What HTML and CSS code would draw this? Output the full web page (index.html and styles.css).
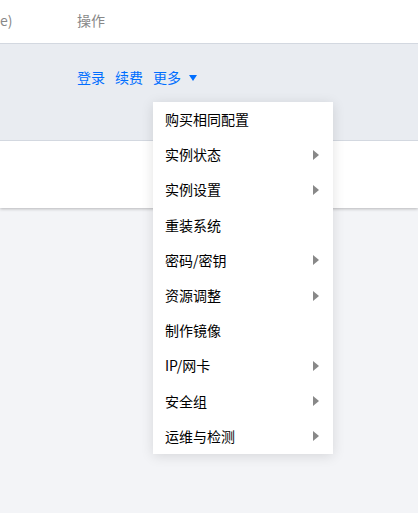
FILE: index.html
```html
<!DOCTYPE html>
<html>
<head>
	<meta charset="utf-8">
	<meta name="viewport" content="width=device-width, initial-scale=1">
	<title>实例列表</title>
	<link rel="stylesheet" href="styles.css">
</head>
<body>
	<div class="table">
		<div class="row thead">
			<div class="cell first">e)</div>
			<div class="cell">操作</div>
		</div>
		<div class="row hover">
			<div class="cell first"></div>
			<div class="cell actions">
				<a class="link">登录</a>
				<a class="link">续费</a>
				<span class="more">
					<a class="link">更多</a>
					<i class="caret"></i>
					<ul class="dropdown">
						<li>购买相同配置</li>
						<li class="sub">实例状态</li>
						<li class="sub">实例设置</li>
						<li>重装系统</li>
						<li class="sub">密码/密钥</li>
						<li class="sub">资源调整</li>
						<li>制作镜像</li>
						<li class="sub">IP/网卡</li>
						<li class="sub">安全组</li>
						<li class="sub">运维与检测</li>
					</ul>
				</span>
			</div>
		</div>
		<div class="row plain">
			<div class="cell first"></div>
			<div class="cell"></div>
		</div>
	</div>
</body>
</html>
```

FILE: styles.css
```css
html, body {
	min-height: 100vh;
}

body {
	margin: 0;
	padding: 0;
	background-color: #f3f4f7;
	font-family: "Noto Sans CJK SC", "Noto Sans", sans-serif;
	font-size: 14px;
	color: #000;
}

.table {
	background: #fff;
	box-shadow: 0 1px 3px rgba(0, 0, 0, 0.25);
}

.row {
	display: grid;
	grid-template-columns: 77px 1fr;
	border-bottom: 1px solid #d3d8e0;
}

.row:last-child {
	border-bottom: none;
}

.thead {
	height: 43px;
	color: #888;
	line-height: 40px;
}

.hover {
	height: 96px;
	background: #e9ecf1;
}

.plain {
	height: 67px;
}

.actions {
	padding-top: 24px;
	line-height: 18px;
	display: flex;
	align-items: flex-start;
	gap: 10px;
}

.link {
	color: #006eff;
	cursor: pointer;
}

.more {
	position: relative;
	display: flex;
	align-items: center;
	gap: 8px;
}

.caret {
	width: 0;
	height: 0;
	border-left: 4px solid transparent;
	border-right: 4px solid transparent;
	border-top: 6px solid #006eff;
	margin-top: 1px;
}

.dropdown {
	position: absolute;
	left: 0;
	top: 34px;
	width: 180px;
	margin: 0;
	padding: 0;
	list-style: none;
	background: #fff;
	box-shadow: 0 2px 12px rgba(0, 0, 0, 0.12);
	z-index: 2;
}

.dropdown li {
	height: 35.2px;
	line-height: 35.2px;
	padding: 0 14px 0 12px;
	display: flex;
	justify-content: space-between;
	align-items: center;
	color: #000;
	white-space: nowrap;
}

.dropdown li.sub::after {
	content: "";
	width: 0;
	height: 0;
	border-top: 5px solid transparent;
	border-bottom: 5px solid transparent;
	border-left: 6px solid #888;
}
```
